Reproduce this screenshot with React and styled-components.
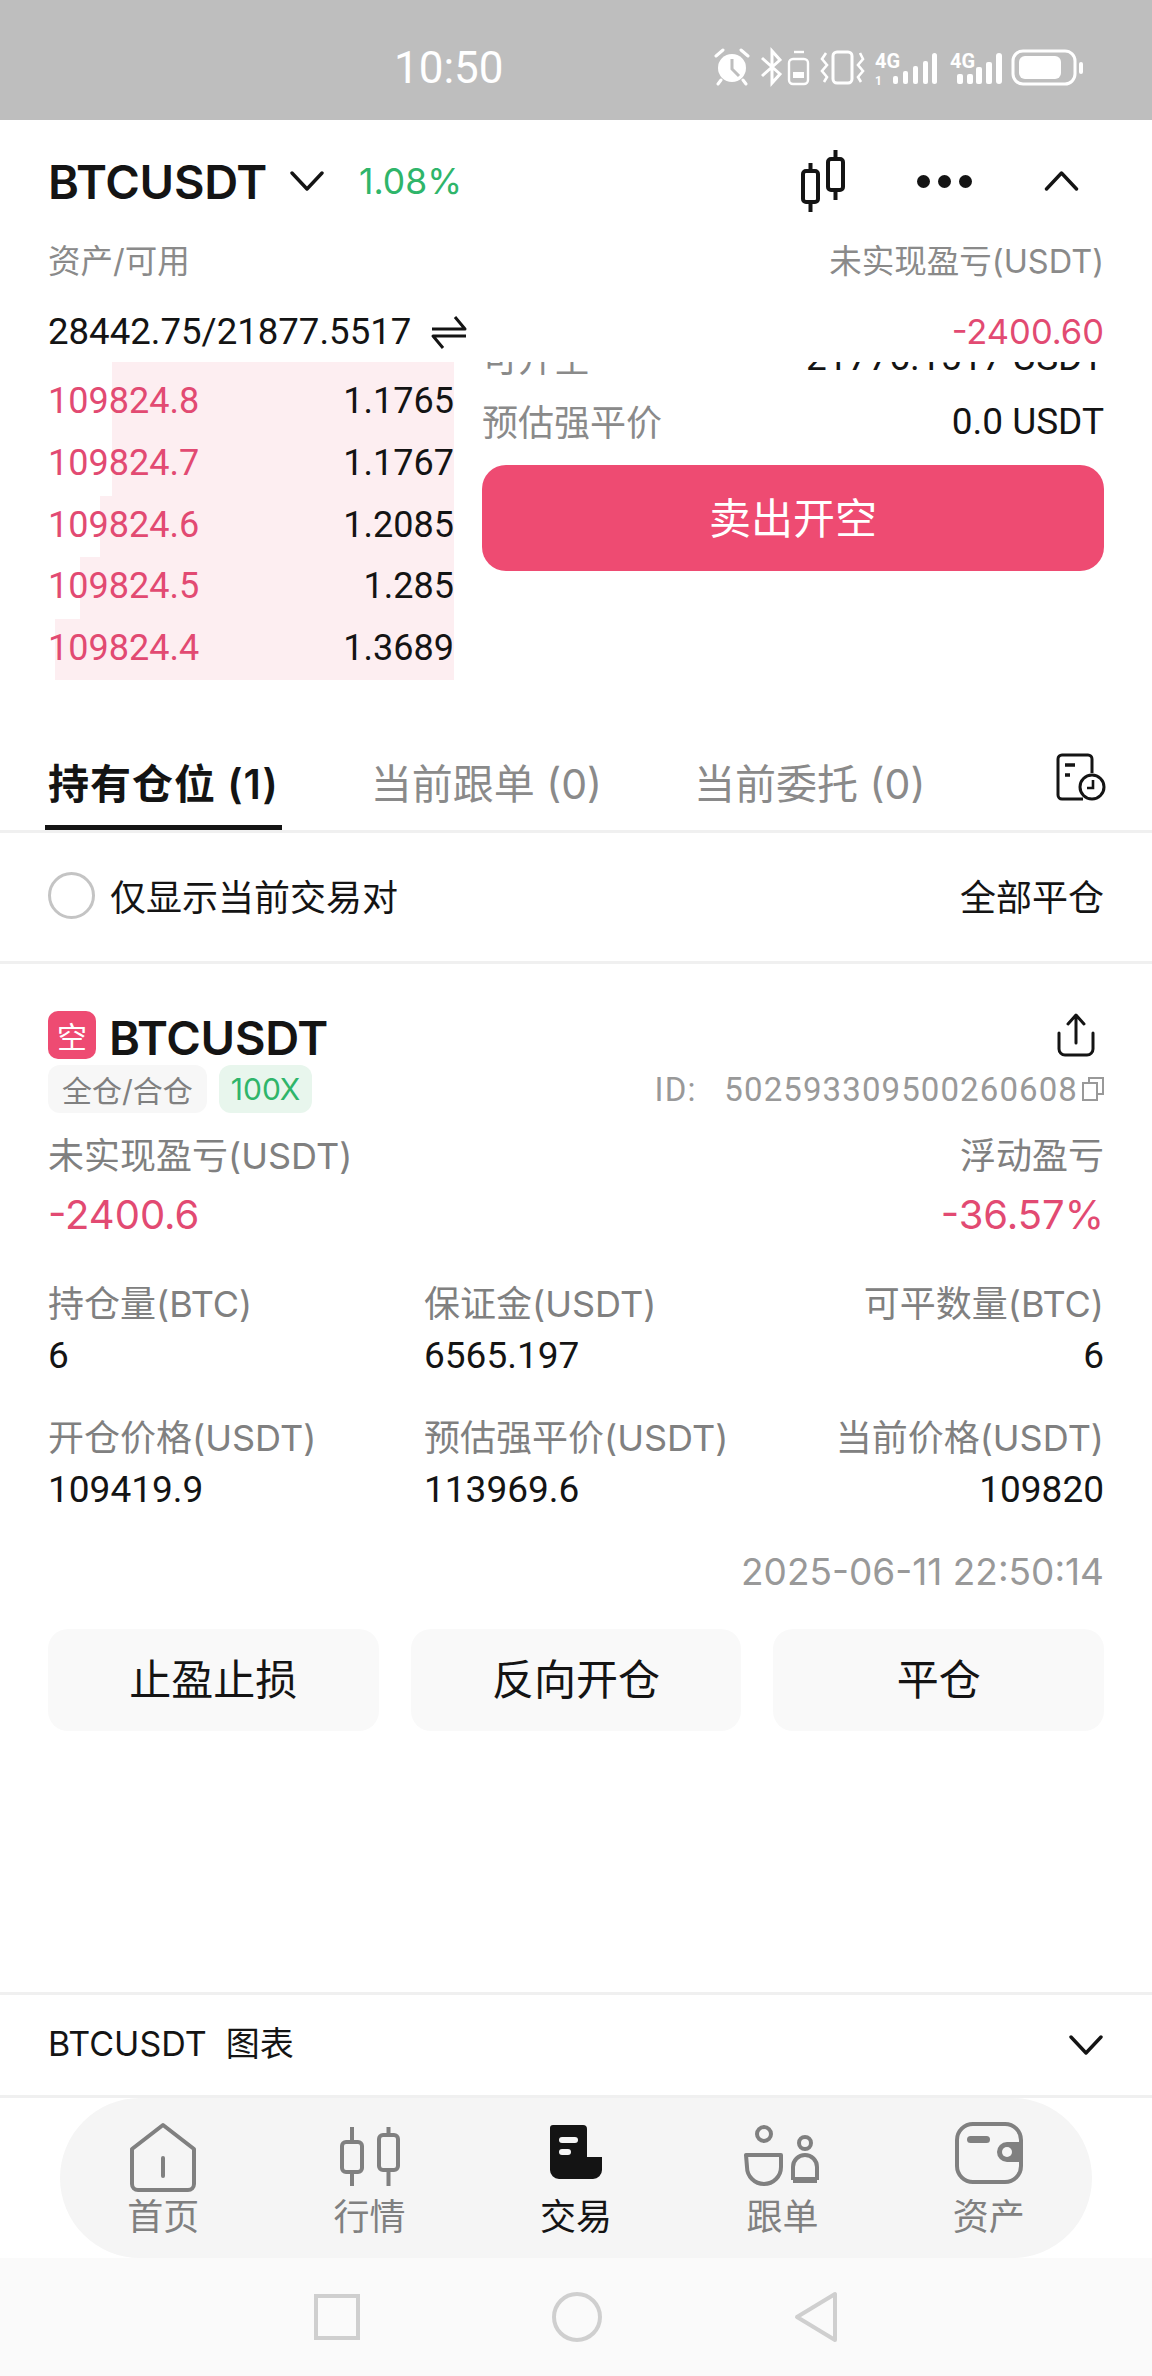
import styled, { createGlobalStyle } from "styled-components";

const GlobalStyle = createGlobalStyle`
  html, body { margin: 0; padding: 0; background: #fff; }
  * { box-sizing: border-box; }
  body { font-family: Inter, "Noto Sans CJK SC", sans-serif; color: #141414; }
`;

const numberFont = `Roboto, "Noto Sans CJK SC", sans-serif`;

const asks = [
  { price: "109824.8", qty: "1.1765", left: 64 },
  { price: "109824.7", qty: "1.1767", left: 64 },
  { price: "109824.6", qty: "1.2085", left: 52 },
  { price: "109824.5", qty: "1.285", left: 32 },
  { price: "109824.4", qty: "1.3689", left: 7 },
];

const stats = [
  [
    { label: "持仓量(BTC)", value: "6" },
    { label: "保证金(USDT)", value: "6565.197" },
    { label: "可平数量(BTC)", value: "6" },
  ],
  [
    { label: "开仓价格(USDT)", value: "109419.9" },
    { label: "预估强平价(USDT)", value: "113969.6" },
    { label: "当前价格(USDT)", value: "109820" },
  ],
];

function Chevron({ dir, width = 34, height = 20 }) {
  const d = dir === "up" ? "M2 18 L17 2 L32 18" : "M2 2 L17 18 L32 2";
  return (
    <svg width={width} height={height} viewBox="0 0 34 20" fill="none" stroke="#141414" strokeWidth="3.4" strokeLinecap="round" strokeLinejoin="round">
      <path d={d} />
    </svg>
  );
}

function StatusIcons() {
  return (
    <svg width="372" height="40" viewBox="0 0 372 40" fill="none" stroke="#fff">
      {/* alarm */}
      <circle cx="18" cy="21" r="14" fill="#fff" stroke="none" />
      <path d="M18 12 V22 L25 29" stroke="#bebebe" strokeWidth="3" />
      <path d="M2 9 L9 3 M27 3 L34 9 M7 33 L4 37 M29 33 L32 37" strokeWidth="3" strokeLinecap="round" />
      {/* bluetooth + small battery */}
      <path d="M48 11 L66 27 L58 36 V4 L66 13 L48 29" strokeWidth="3" />
      <rect x="75" y="12" width="19" height="25" rx="4" strokeWidth="2.4" />
      <path d="M80 5 H90" strokeWidth="2.4" />
      <rect x="79" y="25" width="11" height="6" fill="#fff" stroke="none" />
      {/* vibrate */}
      <rect x="119" y="5" width="19" height="31" rx="4" strokeWidth="3" />
      <path d="M112 6 L108 12 L113 18 L108 24 L113 30 L110 35 M146 6 L149 12 L144 18 L149 24 L144 30 L147 35" strokeWidth="2.6" />
      {/* sim 1 */}
      <text x="161" y="21" fill="#fff" stroke="none" fontFamily="Roboto, sans-serif" fontSize="20" fontWeight="700">4G</text>
      <text x="161" y="38" fill="#fff" stroke="none" fontFamily="Roboto, sans-serif" fontSize="12" fontWeight="700">1</text>
      <g fill="#fff" stroke="none">
        <rect x="179" y="29" width="5" height="8" rx="2" />
        <rect x="189" y="24" width="5" height="13" rx="2" />
        <rect x="199" y="19" width="5" height="18" rx="2" />
        <rect x="209" y="14" width="5" height="23" rx="2" />
        <rect x="218" y="6" width="5" height="31" rx="2.5" />
      </g>
      {/* sim 2 */}
      <text x="236" y="21" fill="#fff" stroke="none" fontFamily="Roboto, sans-serif" fontSize="20" fontWeight="700">4G</text>
      <g fill="#fff" stroke="none">
        <rect x="243" y="27" width="6" height="10" rx="2" />
        <rect x="253" y="27" width="6" height="10" rx="2" />
        <rect x="262" y="20" width="6" height="17" rx="2" />
        <rect x="272" y="15" width="6" height="22" rx="2" />
        <rect x="282" y="6" width="6" height="31" rx="3" />
      </g>
      {/* battery */}
      <rect x="299" y="4" width="62" height="33" rx="10" strokeWidth="3" />
      <rect x="305" y="9" width="42" height="23" rx="6" fill="#fff" stroke="none" />
      <rect x="365" y="15" width="4" height="12" rx="2" fill="#fff" stroke="none" />
    </svg>
  );
}

function HeaderCandleIcon() {
  return (
    <svg width="46" height="62" viewBox="0 0 46 62" fill="none" stroke="#141414" strokeWidth="4">
      <rect x="3" y="21" width="15" height="31" rx="3" />
      <path d="M10.5 13 V21 M10.5 52 V62" />
      <rect x="28" y="9" width="15" height="31" rx="3" />
      <path d="M35.5 0 V9 M35.5 40 V50" />
    </svg>
  );
}

function NavCandleIcon() {
  return (
    <svg width="62" height="66" viewBox="0 -4 62 66" fill="none" stroke="#808080" strokeWidth="4">
      <rect x="3" y="16" width="20" height="30" rx="4" />
      <path d="M13 1 V16 M13 46 V60" />
      <rect x="40" y="9" width="19" height="35" rx="4" />
      <path d="M49.5 1 V9 M49.5 44 V60" />
    </svg>
  );
}

function SwapIcon() {
  return (
    <svg width="36" height="34" viewBox="0 0 36 34" fill="none" stroke="#141414" strokeWidth="3" strokeLinejoin="round">
      <path d="M1 14 H34 L24 2" />
      <path d="M35 21 H2 L12 33" />
    </svg>
  );
}

function HistoryIcon() {
  return (
    <svg width="50" height="48" viewBox="0 0 50 48" fill="none" stroke="#141414" strokeWidth="3">
      <path d="M27 46 H6 A4 4 0 0 1 2 42 V6 A4 4 0 0 1 6 2 H32 A4 4 0 0 1 36 6 V20" />
      <path d="M9 12 H19 M9 22 H14" strokeWidth="3.4" />
      <circle cx="36" cy="34" r="12" />
      <path d="M37 27 V35 H31" strokeWidth="2.6" />
    </svg>
  );
}

function ShareIcon() {
  return (
    <svg width="38" height="44" viewBox="0 0 38 44" fill="none" stroke="#141414" strokeWidth="3" strokeLinecap="round" strokeLinejoin="round">
      <path d="M2 20 V36 A6 6 0 0 0 8 42 H30 A6 6 0 0 0 36 36 V20" />
      <path d="M19 30 V3 M11 11 L19 2 L27 11" />
    </svg>
  );
}

function CopyIcon() {
  return (
    <svg width="22" height="24" viewBox="0 0 22 24" fill="none" stroke="#999" strokeWidth="2">
      <path d="M7 5 V1 H21 V17 H16" />
      <rect x="1" y="6" width="14" height="17" />
    </svg>
  );
}

function HomeIcon() {
  return (
    <svg width="68" height="70" viewBox="0 0 68 70" fill="none" stroke="#808080" strokeWidth="4" strokeLinejoin="round">
      <path d="M34 3 L65 27 V62 A6 6 0 0 1 59 68 H9 A6 6 0 0 1 3 62 V27 Z" />
      <path d="M34 36 V54" strokeLinecap="round" />
    </svg>
  );
}

function TradeIcon() {
  return (
    <svg width="54" height="58" viewBox="0 -2 54 58" fill="#141414">
      <path d="M4 1 H34 A4 4 0 0 1 38 5 V33 H53 V46 A9 9 0 0 1 44 55 H10 A9 9 0 0 1 1 46 V4 A3 3 0 0 1 4 1 Z" />
      <rect x="10" y="13" width="19" height="6" rx="3" fill="#f5f5f5" />
      <rect x="10" y="25" width="12" height="6" rx="3" fill="#f5f5f5" />
    </svg>
  );
}

function CopyTradeIcon() {
  return (
    <svg width="76" height="65" viewBox="0 -3 76 65" fill="none" stroke="#808080" strokeWidth="4">
      <circle cx="20" cy="9" r="7" />
      <path d="M2 30 H37 V42 A17 17 0 0 1 3 42 Z" strokeLinejoin="round" />
      <circle cx="61" cy="18" r="6" />
      <path d="M49 55 V42 A12 12 0 0 1 73 42 V55" />
      <path d="M49 55 H73" strokeWidth="6" />
    </svg>
  );
}

function WalletIcon() {
  return (
    <svg width="68" height="62" viewBox="0 0 68 62" fill="none" stroke="#808080" strokeWidth="4">
      <rect x="2" y="2" width="64" height="58" rx="16" />
      <rect x="12" y="14" width="23" height="7" rx="3.5" fill="#808080" stroke="none" />
      <path d="M66 20 H52 A10 10 0 0 0 52 40 H66 Z" fill="#808080" stroke="none" />
      <circle cx="52" cy="30" r="5" fill="#f5f5f5" stroke="none" />
    </svg>
  );
}

const navItems = [
  { label: "首页", icon: <HomeIcon /> },
  { label: "行情", icon: <NavCandleIcon /> },
  { label: "交易", icon: <TradeIcon />, active: true },
  { label: "跟单", icon: <CopyTradeIcon /> },
  { label: "资产", icon: <WalletIcon /> },
];

export default function App() {
  return (
    <Page>
      <GlobalStyle />
      <StatusBar>
        <Clock>10:50</Clock>
        <StatusIcons />
      </StatusBar>

      <Header>
        <Symbol>BTCUSDT</Symbol>
        <HeaderChevron>
          <Chevron dir="down" />
        </HeaderChevron>
        <Change>1.08%</Change>
        <HeaderActions>
          <HeaderCandleIcon />
          <Dots>
            <i />
            <i />
            <i />
          </Dots>
          <Chevron dir="up" width={37} />
        </HeaderActions>
      </Header>

      <Summary>
        <SummaryCol>
          <MutedLabel>资产/可用</MutedLabel>
          <SummaryValue>
            28442.75/21877.5517 <SwapIcon />
          </SummaryValue>
        </SummaryCol>
        <SummaryCol $right>
          <MutedLabel>未实现盈亏(USDT)</MutedLabel>
          <SummaryValue $pink>-2400.60</SummaryValue>
        </SummaryCol>
      </Summary>

      <Trade>
        <Book>
          {asks.map((a) => (
            <BookRow key={a.price}>
              <DepthBar $left={a.left} />
              <BookPrice>{a.price}</BookPrice>
              <BookQty>{a.qty}</BookQty>
            </BookRow>
          ))}
        </Book>
        <OrderPanel>
          <OrderScroll>
            <OrderRow>
              <OrderLabel>可开空</OrderLabel>
              <OrderValue>21776.1517 USDT</OrderValue>
            </OrderRow>
            <OrderRow>
              <OrderLabel>预估强平价</OrderLabel>
              <OrderValue>0.0 USDT</OrderValue>
            </OrderRow>
          </OrderScroll>
          <SellButton>卖出开空</SellButton>
        </OrderPanel>
      </Trade>

      <Tabs>
        <Tab $active>
          持有仓位 (1)
          <TabLine />
        </Tab>
        <Tab>当前跟单 (0)</Tab>
        <Tab>当前委托 (0)</Tab>
        <TabIcon>
          <HistoryIcon />
        </TabIcon>
      </Tabs>

      <FilterRow>
        <FilterLeft>
          <Radio />
          <span>仅显示当前交易对</span>
        </FilterLeft>
        <span>全部平仓</span>
      </FilterRow>

      <Position>
        <PositionHead>
          <SideTag>空</SideTag>
          <PositionName>BTCUSDT</PositionName>
          <ShareIcon />
        </PositionHead>
        <MetaRow>
          <Chip>全仓/合仓</Chip>
          <Chip $green>100X</Chip>
          <PositionId>
            <span>ID:&nbsp;&nbsp;&nbsp;502593309500260608</span>
            <CopyIcon />
          </PositionId>
        </MetaRow>

        <PnlRow>
          <div>
            <StatLabel>未实现盈亏(USDT)</StatLabel>
            <PnlValue>-2400.6</PnlValue>
          </div>
          <PnlRight>
            <StatLabel>浮动盈亏</StatLabel>
            <PnlValue>-36.57%</PnlValue>
          </PnlRight>
        </PnlRow>

        {stats.map((row) => (
          <StatGrid key={row[0].label}>
            {row.map((s) => (
              <Stat key={s.label}>
                <StatLabel>{s.label}</StatLabel>
                <StatValue>{s.value}</StatValue>
              </Stat>
            ))}
          </StatGrid>
        ))}

        <OpenTime>2025-06-11 22:50:14</OpenTime>

        <Actions>
          <ActionButton>止盈止损</ActionButton>
          <ActionButton>反向开仓</ActionButton>
          <ActionButton>平仓</ActionButton>
        </Actions>
      </Position>

      <ChartRow>
        <span>BTCUSDT&nbsp;&nbsp;图表</span>
        <Chevron dir="down" width={36} />
      </ChartRow>

      <NavWrap>
        <NavPill>
          {navItems.map((n) => (
            <NavItem key={n.label} $active={n.active}>
              <NavIcon>{n.icon}</NavIcon>
              {n.label}
            </NavItem>
          ))}
        </NavPill>
      </NavWrap>

      <SystemBar>
        <svg width="46" height="48" viewBox="0 0 46 48" fill="none" stroke="#cfcfcf" strokeWidth="4">
          <rect x="2" y="3" width="42" height="42" />
        </svg>
        <svg width="50" height="50" viewBox="0 0 50 50" fill="none" stroke="#cfcfcf" strokeWidth="4">
          <circle cx="25" cy="25" r="23" />
        </svg>
        <svg width="44" height="52" viewBox="0 0 44 52" fill="none" stroke="#cfcfcf" strokeWidth="4" strokeLinejoin="round">
          <path d="M41 3 V49 L3 26 Z" />
        </svg>
      </SystemBar>
    </Page>
  );
}

const Page = styled.div`
  width: 1152px;
  height: 2376px;
  display: flex;
  flex-direction: column;
  overflow: hidden;
  background: #fff;
`;

const StatusBar = styled.div`
  height: 120px;
  flex: none;
  background: #bebebe;
  display: flex;
  align-items: center;
  padding: 8px 0 0 394px;
  gap: 216px;
  & > svg { margin: 6px 0 0 -1px; }
`;

const Clock = styled.div`
  font-family: Roboto, sans-serif;
  font-size: 44px;
  color: #fff;
  width: 105px;
  margin-top: 8px;
`;

const Header = styled.div`
  height: 122px;
  flex: none;
  display: flex;
  align-items: center;
  padding: 0 48px;
`;

const Symbol = styled.div`
  font-size: 47px;
  font-weight: 600;
  letter-spacing: -0.3px;
`;

const HeaderChevron = styled.div`
  display: flex;
  margin-left: 23px;
`;

const Change = styled.div`
  font-size: 35.5px;
  color: #2fb56a;
  margin-left: 35px;
`;

const HeaderActions = styled.div`
  margin-left: auto;
  display: flex;
  align-items: center;
  gap: 71px;
  margin-right: 24px;
`;

const Dots = styled.div`
  display: flex;
  gap: 8px;
  & > i {
    width: 13px;
    height: 13px;
    border-radius: 50%;
    background: #141414;
  }
`;

const Summary = styled.div`
  height: 120px;
  flex: none;
  display: flex;
  justify-content: space-between;
  padding: 0 48px;
`;

const SummaryCol = styled.div`
  display: flex;
  flex-direction: column;
  align-items: ${(p) => (p.$right ? "flex-end" : "flex-start")};
`;

const MutedLabel = styled.div`
  font-size: 32.5px;
  line-height: 44px;
  margin-top: -2px;
  color: #8a8a8a;
`;

const SummaryValue = styled.div`
  font-family: ${(p) => (p.$pink ? "Inter" : "Roboto")}, sans-serif;
  font-size: ${(p) => (p.$pink ? "34.5px" : "36.6px")};
  line-height: 44px;
  margin-top: 26px;
  display: flex;
  align-items: center;
  gap: 11px;
  white-space: pre;
  color: ${(p) => (p.$pink ? "#e24a72" : "#141414")};
`;

const Trade = styled.div`
  height: 318px;
  flex: none;
  display: flex;
  align-items: flex-start;
  gap: 28px;
  padding: 0 48px;
`;

const Book = styled.div`
  width: 406px;
  flex: none;
`;

const BookRow = styled.div`
  position: relative;
  height: 61.5px;
  display: flex;
  align-items: center;
  justify-content: space-between;
  padding-bottom: 3px;
  font-family: ${numberFont};
  font-size: 36px;
  &:first-child {
    height: 72px;
    padding-top: 8px;
  }
`;

const DepthBar = styled.div`
  position: absolute;
  top: 0;
  bottom: 0;
  right: 0;
  left: ${(p) => p.$left}px;
  background: #fdeef1;
`;

const BookPrice = styled.span`
  position: relative;
  color: #e24a72;
`;

const BookQty = styled.span`
  position: relative;
`;

const OrderPanel = styled.div`
  flex: 1;
  display: flex;
  flex-direction: column;
`;

const OrderScroll = styled.div`
  height: 103px;
  overflow: hidden;
  display: flex;
  flex-direction: column;
  justify-content: flex-end;
  padding-bottom: 15px;
`;

const OrderRow = styled.div`
  flex: none;
  height: 61px;
  display: flex;
  align-items: center;
  justify-content: space-between;
  margin-top: 3px;
`;

const OrderLabel = styled.span`
  font-size: 36px;
  color: #8a8a8a;
`;

const OrderValue = styled.span`
  font-family: ${numberFont};
  font-size: 37px;
  padding-top: 4px;
`;

const SellButton = styled.div`
  height: 106px;
  padding-bottom: 5px;
  border-radius: 24px;
  background: #ee4b72;
  color: #fff;
  font-size: 42px;
  display: flex;
  align-items: center;
  justify-content: center;
`;

const Tabs = styled.div`
  position: relative;
  height: 153px;
  flex: none;
  display: flex;
  align-items: flex-end;
  padding: 0 48px;
  border-bottom: 3px solid #f0f0f0;
`;

const Tab = styled.div`
  position: relative;
  font-size: 41px;
  line-height: 50px;
  padding-bottom: 21px;
  white-space: nowrap;
  margin-right: 92px;
  letter-spacing: ${(p) => (p.$active ? "1px" : "0")};
  font-weight: ${(p) => (p.$active ? 600 : 400)};
  color: ${(p) => (p.$active ? "#141414" : "#8a8a8a")};
`;

const TabLine = styled.div`
  position: absolute;
  left: -3px;
  right: -3px;
  bottom: 0;
  height: 5px;
  background: #141414;
`;

const TabIcon = styled.div`
  position: absolute;
  right: 46px;
  top: 73px;
`;

const FilterRow = styled.div`
  height: 131px;
  flex: none;
  display: flex;
  align-items: center;
  justify-content: space-between;
  padding: 0 48px 4px;
  font-size: 36px;
  border-bottom: 3px solid #f0f0f0;
`;

const FilterLeft = styled.div`
  display: flex;
  align-items: center;
  gap: 15px;
`;

const Radio = styled.div`
  width: 47px;
  height: 47px;
  border-radius: 50%;
  border: 3px solid #c4c4c4;
`;

const Position = styled.div`
  flex: 1;
  padding: 46px 48px 0;
`;

const PositionHead = styled.div`
  display: flex;
  align-items: center;
  height: 50px;
  & > svg {
    margin-left: auto;
    margin-right: 9px;
  }
`;

const SideTag = styled.div`
  width: 48px;
  height: 48px;
  border-radius: 10px;
  background: #ee4b72;
  color: #fff;
  font-size: 30px;
  display: flex;
  align-items: center;
  justify-content: center;
`;

const PositionName = styled.div`
  font-size: 47px;
  font-weight: 600;
  margin: 5px 0 0 13px;
  letter-spacing: -0.3px;
`;

const MetaRow = styled.div`
  display: flex;
  align-items: center;
  gap: 12px;
  height: 48px;
  margin-top: 5px;
`;

const Chip = styled.div`
  height: 48px;
  padding: 0 ${(p) => (p.$green ? "12px" : "14px")};
  border-radius: 12px;
  font-size: 30px;
  display: flex;
  align-items: center;
  background: ${(p) => (p.$green ? "#e8f6ed" : "#f7f7f7")};
  color: ${(p) => (p.$green ? "#2fb56a" : "#808080")};
`;

const PositionId = styled.div`
  margin-left: auto;
  display: flex;
  align-items: center;
  gap: 4px;
  font-family: Roboto, sans-serif;
  font-size: 33px;
  letter-spacing: 1.1px;
  color: #999;
`;

const PnlRow = styled.div`
  display: flex;
  justify-content: space-between;
  margin-top: 21px;
`;

const PnlRight = styled.div`
  text-align: right;
`;

const StatLabel = styled.div`
  font-size: 36px;
  line-height: 44px;
  color: #808080;
  white-space: nowrap;
`;

const PnlValue = styled.div`
  font-size: 40px;
  line-height: 50px;
  color: #e24a72;
  margin-top: 12px;
`;

const StatGrid = styled.div`
  display: grid;
  grid-template-columns: 376px 1fr auto;
  margin-top: 42px;
  & + & { margin-top: 38px; }
`;

const Stat = styled.div`
  &:last-child { text-align: right; }
`;

const StatValue = styled.div`
  font-family: ${numberFont};
  font-size: 37px;
  line-height: 44px;
  margin-top: 8px;
`;

const OpenTime = styled.div`
  text-align: right;
  font-size: 37px;
  line-height: 44px;
  color: #999;
  margin-top: 38px;
`;

const Actions = styled.div`
  display: grid;
  grid-template-columns: repeat(3, 1fr);
  gap: 32px;
  margin-top: 35px;
`;

const ActionButton = styled.div`
  height: 102px;
  padding-bottom: 7px;
  border-radius: 20px;
  background: #f9f9f9;
  font-size: 42px;
  display: flex;
  align-items: center;
  justify-content: center;
`;

const ChartRow = styled.div`
  height: 106px;
  flex: none;
  display: flex;
  align-items: center;
  justify-content: space-between;
  padding: 0 48px;
  font-size: 34px;
  border-top: 3px solid #f0f0f0;
  border-bottom: 3px solid #f0f0f0;
  & > span { margin-top: -8px; }
`;

const NavWrap = styled.div`
  height: 160px;
  flex: none;
  padding: 0 60px;
  background: #fff;
`;

const NavPill = styled.div`
  height: 100%;
  background: #f5f5f5;
  border-radius: 80px;
  display: grid;
  grid-template-columns: repeat(5, 1fr);
`;

const NavItem = styled.div`
  display: flex;
  flex-direction: column;
  align-items: center;
  padding-top: 24px;
  font-size: 36px;
  line-height: 40px;
  color: ${(p) => (p.$active ? "#141414" : "#808080")};
`;

const NavIcon = styled.div`
  height: 75px;
  display: flex;
  align-items: flex-start;
`;

const SystemBar = styled.div`
  height: 118px;
  flex: none;
  background: #fafafa;
  display: flex;
  align-items: center;
  padding: 0 314px;
  gap: 192px;
`;
